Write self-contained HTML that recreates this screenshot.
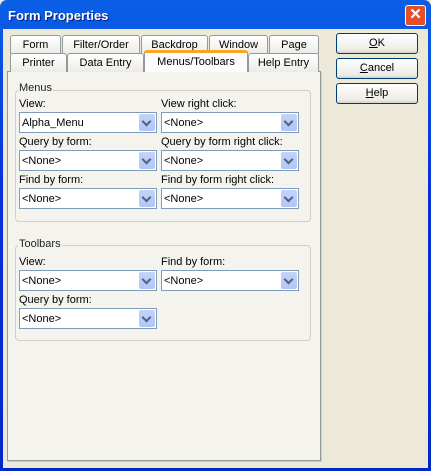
<!DOCTYPE html>
<html><head><meta charset="utf-8"><style>
*{box-sizing:border-box;margin:0;padding:0}
body{width:431px;height:471px;overflow:hidden;font-family:Tahoma,"Liberation Sans",sans-serif;font-size:11px;color:#000;background:#ece9d8;position:relative}
.abs{position:absolute}
#win{left:0;top:0;width:431px;height:471px;background:linear-gradient(#0a5fe6,#0831d9 40%,#0028c8);border-radius:7px 7px 0 0}
#client{left:3px;top:29px;width:425px;height:439px;background:#ece9d8}
#title{left:8px;top:8px;color:#fff;font-weight:bold;font-size:13px;text-shadow:1px 1px #0a1f7a}
#close{left:405px;top:5px;width:21px;height:21px;background:#e0512a;border:1px solid #fff;border-radius:3px;color:#fff;font-weight:bold;font-size:15px;text-align:center;line-height:18px}
.tab{position:absolute;height:19px;background:linear-gradient(#fff,#ecebe6);border:1px solid #919b9c;border-bottom:none;border-radius:3px 3px 0 0;text-align:center;line-height:19px}
#panel{left:7px;top:71px;width:314px;height:390px;background:#f4f3ee;border:1px solid #919b9c;box-shadow:1px 1px 0 #d0cebf}
.sel{background:#fcfcfe;border-top:3px solid #f5a623;height:22px;line-height:18px;z-index:2}
.grp{position:absolute;border:1px solid #d0d0bf;border-radius:4px}
.lg{position:absolute;background:#f4f3ee;padding:0 1px;color:#222}
.lbl{position:absolute}
.cb{position:absolute;width:138px;height:21px;background:#fff;border:1px solid #7f9db9;padding-left:2px;line-height:21px}
.cb i{position:absolute;right:1px;top:1px;width:16px;height:17px;background:linear-gradient(#c6d3f7,#b2c5f4);border-radius:2px}
.cb i:after{content:"";position:absolute;left:4px;top:4px;width:5px;height:5px;border-right:2px solid #4d6185;border-bottom:2px solid #4d6185;transform:rotate(45deg)}
.btn{position:absolute;left:336px;width:82px;height:21px;border:1px solid #003c74;border-radius:3px;background:linear-gradient(#fff,#ecebe6 85%,#d6d0c5);text-align:center;line-height:19px}
</style></head><body>
<div id="win" class="abs"></div>
<div id="client" class="abs"></div>
<div id="title" class="abs">Form Properties</div>
<div id="close" class="abs">✕</div>

<div class="tab" style="left:10px;top:35px;width:51px">Form</div>
<div class="tab" style="left:62px;top:35px;width:78px">Filter/Order</div>
<div class="tab" style="left:141px;top:35px;width:67px">Backdrop</div>
<div class="tab" style="left:209px;top:35px;width:59px">Window</div>
<div class="tab" style="left:269px;top:35px;width:50px">Page</div>
<div id="panel" class="abs"></div>
<div class="tab" style="left:10px;top:53px;width:57px">Printer</div>
<div class="tab" style="left:67px;top:53px;width:77px">Data Entry</div>
<div class="tab sel" style="left:144px;top:50px;width:104px">Menus/Toolbars</div>
<div class="tab" style="left:248px;top:53px;width:71px">Help Entry</div>

<div class="grp" style="left:15px;top:90px;width:296px;height:132px"></div>
<div class="lg" style="left:18px;top:82px">Menus</div>
<div class="lbl" style="left:19px;top:98px">View:</div>
<div class="lbl" style="left:161px;top:98px">View right click:</div>
<div class="cb" style="left:19px;top:112px">Alpha_Menu<i></i></div>
<div class="cb" style="left:161px;top:112px">&lt;None&gt;<i></i></div>
<div class="lbl" style="left:19px;top:136px">Query by form:</div>
<div class="lbl" style="left:161px;top:136px">Query by form right click:</div>
<div class="cb" style="left:19px;top:150px">&lt;None&gt;<i></i></div>
<div class="cb" style="left:161px;top:150px">&lt;None&gt;<i></i></div>
<div class="lbl" style="left:19px;top:174px">Find by form:</div>
<div class="lbl" style="left:161px;top:174px">Find by form right click:</div>
<div class="cb" style="left:19px;top:188px">&lt;None&gt;<i></i></div>
<div class="cb" style="left:161px;top:188px">&lt;None&gt;<i></i></div>

<div class="grp" style="left:15px;top:245px;width:296px;height:96px"></div>
<div class="lg" style="left:18px;top:238px">Toolbars</div>
<div class="lbl" style="left:19px;top:256px">View:</div>
<div class="lbl" style="left:161px;top:256px">Find by form:</div>
<div class="cb" style="left:19px;top:270px">&lt;None&gt;<i></i></div>
<div class="cb" style="left:161px;top:270px">&lt;None&gt;<i></i></div>
<div class="lbl" style="left:19px;top:294px">Query by form:</div>
<div class="cb" style="left:19px;top:308px">&lt;None&gt;<i></i></div>

<div class="btn" style="top:33px"><u>O</u>K</div>
<div class="btn" style="top:58px"><u>C</u>ancel</div>
<div class="btn" style="top:83px"><u>H</u>elp</div>
</body></html>
